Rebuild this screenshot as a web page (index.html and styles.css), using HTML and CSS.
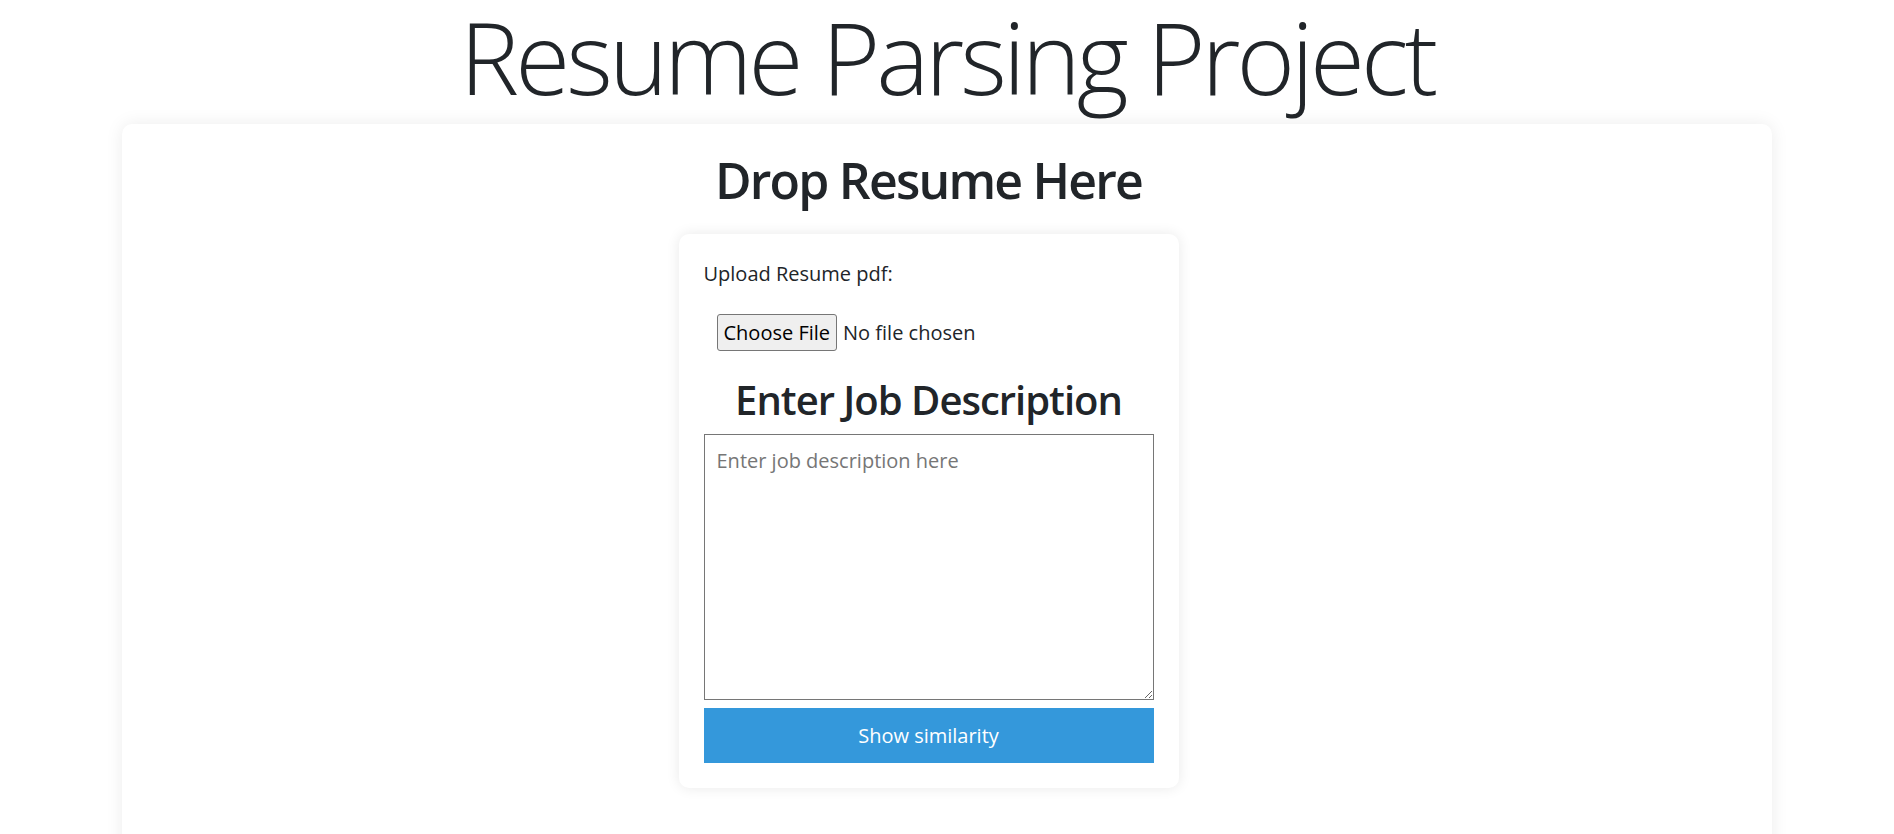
FILE: index.html
```html
<!DOCTYPE html>
<html lang="en">
<head>
<meta charset="utf-8">
<title>Resume Parsing Project</title>
<link rel="stylesheet" href="styles.css">
</head>
<body>
  <h1 class="page-title">Resume Parsing Project</h1>
  <main class="panel">
    <div class="panel-inner">
      <h2 class="drop-title">Drop Resume Here</h2>
      <form class="upload-card">
        <label class="upload-label" for="resume">Upload Resume pdf:</label>
        <input class="file-input" type="file" id="resume" accept=".pdf">
        <h3 class="jd-title">Enter Job Description</h3>
        <textarea class="jd-text" placeholder="Enter job description here"></textarea>
        <button class="submit-btn" type="button">Show similarity</button>
      </form>
    </div>
  </main>
</body>
</html>
```
FILE: styles.css
```css
html, body {
  margin: 0;
  padding: 0;
  background: #ffffff;
}

body {
  font-family: "Open Sans", "Noto Sans", "Liberation Sans", sans-serif;
  color: #212529;
  font-size: 20px;
  line-height: 1.5;
  height: 834px;
  overflow: hidden;
}

.page-title {
  margin: 0;
  height: 124px;
  padding-top: 6px;
  box-sizing: border-box;
  text-align: center;
  font-size: 100px;
  font-weight: 300;
  line-height: 100px;
  letter-spacing: -3.9px;
}

.panel {
  width: 1650px;
  margin: 0 auto;
  min-height: 800px;
  background: #ffffff;
  border-radius: 10px;
  box-shadow: 0 0 18px rgba(0, 0, 0, 0.08);
}

.panel-inner {
  display: flex;
  flex-direction: column;
  align-items: center;
  padding: 0 37px 0 0;
}

.drop-title {
  margin: 0;
  padding-top: 26px;
  font-size: 50px;
  font-weight: 600;
  line-height: 60px;
  letter-spacing: -1.8px;
  height: 110px;
  box-sizing: border-box;
}

.upload-card {
  width: 500px;
  box-sizing: border-box;
  padding: 25px;
  border-radius: 10px;
  background: #ffffff;
  box-shadow: 0 0 14px rgba(0, 0, 0, 0.09);
  display: flex;
  flex-direction: column;
  align-items: stretch;
}

.upload-label {
  display: block;
  font-size: 20px;
  line-height: 30px;
}

.file-input {
  margin: 25px 0 0 13px;
  font-family: inherit;
  font-size: 20px;
  color: #212529;
  line-height: 28px;
  height: 37px;
}

.file-input::file-selector-button {
  font-family: inherit;
  font-size: 20px;
  color: #000000;
  background: #efefef;
  border: 1px solid #767676;
  border-radius: 3px;
  padding: 2px 6px;
  height: 37px;
  margin-right: 6px;
}

.jd-title {
  margin: 0;
  padding-top: 25px;
  text-align: center;
  font-size: 40px;
  font-weight: 600;
  line-height: 48px;
  letter-spacing: -1px;
  height: 83px;
  box-sizing: border-box;
}

.jd-text {
  display: block;
  width: 450px;
  height: 266px;
  box-sizing: border-box;
  margin: 0;
  padding: 11px 12px;
  border: 1px solid #767676;
  border-radius: 0;
  font-family: inherit;
  font-size: 20px;
  line-height: 30px;
  color: #212529;
  resize: vertical;
}

.jd-text::placeholder {
  color: #767676;
}

.submit-btn {
  display: block;
  margin-top: 8px;
  width: 450px;
  height: 55px;
  border: none;
  background: #3498db;
  color: #ffffff;
  font-family: inherit;
  font-size: 20px;
  cursor: pointer;
}
```
